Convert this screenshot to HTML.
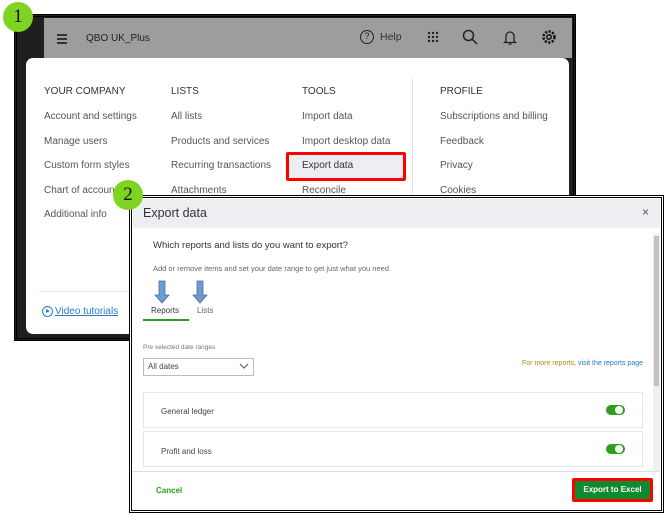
<!DOCTYPE html>
<html><head><meta charset="utf-8"><style>
*{margin:0;padding:0;box-sizing:border-box}
body{width:671px;height:516px;background:#fff;position:relative;overflow:hidden;font-family:"Liberation Sans",sans-serif;color:#444}
.abs{position:absolute}
.t{position:absolute;font-size:10px;color:#555;white-space:nowrap}
.h{position:absolute;font-size:10px;color:#333;white-space:nowrap}
.circ{position:absolute;width:30px;height:30px;border-radius:50%;background:#7fd321;font-family:"Liberation Serif",serif;font-size:19px;color:#111;text-align:center;line-height:30px}
</style></head><body>
<div class="abs" style="left:14px;top:14px;width:562px;height:327px;border:3px double #000;background:#1f1f1f"></div>
<div class="abs" style="left:44px;top:18px;width:528px;height:40px;background:#9d9d9d"></div>
<div class="abs" style="left:57px;top:34px;width:10px;height:1.5px;background:#333;box-shadow:0 4px 0 #333,0 8px 0 #333"></div>
<div class="h" style="left:86px;top:33px;font-size:10px;color:#222">QBO UK_Plus</div>
<div class="abs" style="left:360px;top:30px;width:14px;height:14px;border:1.5px solid #222;border-radius:50%;font-size:9px;text-align:center;line-height:11px;color:#222">?</div>
<div class="h" style="left:380px;top:31px;font-size:10.5px;color:#333">Help</div>
<svg class="abs" style="left:427px;top:31px" width="12" height="12"><g fill="#222"><circle cx="2" cy="2" r="1.2"/><circle cx="6" cy="2" r="1.2"/><circle cx="10" cy="2" r="1.2"/><circle cx="2" cy="6" r="1.2"/><circle cx="6" cy="6" r="1.2"/><circle cx="10" cy="6" r="1.2"/><circle cx="2" cy="10" r="1.2"/><circle cx="6" cy="10" r="1.2"/><circle cx="10" cy="10" r="1.2"/></g></svg>
<svg class="abs" style="left:462px;top:29px" width="16" height="16"><circle cx="6.5" cy="6.5" r="5" fill="none" stroke="#222" stroke-width="1.5"/><line x1="10" y1="10" x2="15" y2="15" stroke="#222" stroke-width="1.5"/></svg>
<svg class="abs" style="left:503px;top:29px" width="14" height="17"><path d="M3 12V7a4 4 0 0 1 8 0v5l1.5 1.5h-11z" fill="none" stroke="#222" stroke-width="1.3"/><path d="M5.5 15h3" stroke="#222" stroke-width="1.3"/></svg>
<svg class="abs" style="left:541px;top:29px" width="16" height="16"><circle cx="8" cy="8" r="5.5" fill="none" stroke="#111" stroke-width="2.5" stroke-dasharray="2.2 1.4"/><circle cx="8" cy="8" r="2.2" fill="none" stroke="#111" stroke-width="1.5"/></svg>
<div class="abs" style="left:26px;top:58px;width:543px;height:276px;background:#fff;border-radius:7px"></div>
<div class="abs" style="left:412px;top:78px;width:1px;height:116px;background:#e3e3e3"></div>
<div class="abs" style="left:39px;top:291px;width:90px;height:1px;background:#e3e3e3"></div>
<div class="h" style="left:44px;top:86px">YOUR COMPANY</div>
<div class="t" style="left:44px;top:111px">Account and settings</div>
<div class="t" style="left:44px;top:136px">Manage users</div>
<div class="t" style="left:44px;top:160px">Custom form styles</div>
<div class="t" style="left:44px;top:185px">Chart of accounts</div>
<div class="t" style="left:44px;top:209px">Additional info</div>
<div class="h" style="left:171px;top:86px">LISTS</div>
<div class="t" style="left:171px;top:111px">All lists</div>
<div class="t" style="left:171px;top:136px">Products and services</div>
<div class="t" style="left:171px;top:160px">Recurring transactions</div>
<div class="t" style="left:171px;top:185px">Attachments</div>
<div class="h" style="left:302px;top:86px">TOOLS</div>
<div class="t" style="left:302px;top:111px">Import data</div>
<div class="t" style="left:302px;top:136px">Import desktop data</div>
<div class="abs" style="left:286px;top:152px;width:120px;height:29px;border:3px solid #f00;background:#eceef1;border-radius:2px"></div>
<div class="t" style="left:302px;top:160px;color:#333">Export data</div>
<div class="t" style="left:302px;top:185px">Reconcile</div>
<div class="h" style="left:440px;top:86px">PROFILE</div>
<div class="t" style="left:440px;top:111px">Subscriptions and billing</div>
<div class="t" style="left:440px;top:136px">Feedback</div>
<div class="t" style="left:440px;top:160px">Privacy</div>
<div class="t" style="left:440px;top:185px">Cookies</div>
<div class="abs" style="left:42px;top:306px;width:11px;height:11px;border:1.3px solid #2a7ac4;border-radius:50%"></div>
<div class="abs" style="left:46px;top:309px;width:0;height:0;border-left:4px solid #2a7ac4;border-top:2.5px solid transparent;border-bottom:2.5px solid transparent"></div>
<div class="t" style="left:55px;top:306px;color:#2a7ac4;text-decoration:underline">Video tutorials</div>
<div class="circ" style="left:3px;top:2px">1</div>
<div class="abs" style="left:129px;top:195px;width:535px;height:318px;border:3px double #000;background:#fff"></div>
<div class="abs" style="left:133px;top:199px;width:527px;height:29px;background:#eceef1"></div>
<div class="h" style="left:143px;top:206px;font-size:12.5px;color:#333">Export data</div>
<div class="h" style="left:642px;top:205px;font-size:12px;color:#555">×</div>
<div class="abs" style="left:653px;top:233px;width:7px;height:238px;background:#f0f0f0"></div>
<div class="abs" style="left:654px;top:236px;width:5px;height:150px;background:#c1c1c1"></div>
<div class="h" style="left:153px;top:240px;font-size:9.5px;color:#333">Which reports and lists do you want to export?</div>
<div class="t" style="left:153px;top:264px;font-size:7.5px;color:#666">Add or remove items and set your date range to get just what you need.</div>
<svg class="abs" style="left:154px;top:280px" width="60" height="25"><path d="M5 1h6v14h4l-7 8-7-8h4z" fill="#6d9bd1" stroke="#41719c" stroke-width="0.8"/><path d="M43 1h6v14h4l-7 8-7-8h4z" fill="#6d9bd1" stroke="#41719c" stroke-width="0.8"/></svg>
<div class="t" style="left:151px;top:306px;font-size:8px;color:#333">Reports</div>
<div class="t" style="left:197px;top:306px;font-size:8px;color:#666">Lists</div>
<div class="abs" style="left:143px;top:319px;width:46px;height:2px;background:#2ca01c"></div>
<div class="t" style="left:143px;top:344px;font-size:6.5px;color:#777">Pre selected date ranges</div>
<div class="abs" style="left:143px;top:358px;width:111px;height:18px;border:1px solid #bbb"></div>
<div class="t" style="left:148px;top:362px;font-size:8px;color:#444">All dates</div>
<svg class="abs" style="left:239px;top:363px" width="10" height="6"><path d="M1 1l4 4 4-4" fill="none" stroke="#666" stroke-width="1.2"/></svg>
<div class="t" style="right:28px;top:360px;font-size:7px;color:#b8860b">For more reports, <span style="color:#2a7ac4">visit the reports page</span></div>
<div class="abs" style="left:143px;top:392px;width:500px;height:36px;border:1px solid #e6e6e6"></div>
<div class="abs" style="left:143px;top:431px;width:500px;height:36px;border:1px solid #e6e6e6"></div>
<div class="t" style="left:161px;top:407px;font-size:8px;color:#444">General ledger</div>
<div class="t" style="left:161px;top:447px;font-size:8px;color:#444">Profit and loss</div>
<div class="abs" style="left:606px;top:405px;width:19px;height:10px;border-radius:5px;background:#2ca01c"></div>
<div class="abs" style="left:615px;top:406px;width:8px;height:8px;border-radius:50%;background:#fff"></div>
<div class="abs" style="left:606px;top:444px;width:19px;height:10px;border-radius:5px;background:#2ca01c"></div>
<div class="abs" style="left:615px;top:445px;width:8px;height:8px;border-radius:50%;background:#fff"></div>
<div class="abs" style="left:133px;top:471px;width:527px;height:1px;background:#ddd"></div>
<div class="h" style="left:156px;top:486px;font-size:8px;font-weight:bold;color:#2ca01c">Cancel</div>
<div class="abs" style="left:572px;top:478px;width:81px;height:24px;border:3px solid #f00;background:#108a30;border-radius:2px;color:#fff;font-size:8px;font-weight:bold;text-align:center;line-height:18px">Export to Excel</div>
<div class="circ" style="left:113px;top:180px">2</div>
</body></html>
